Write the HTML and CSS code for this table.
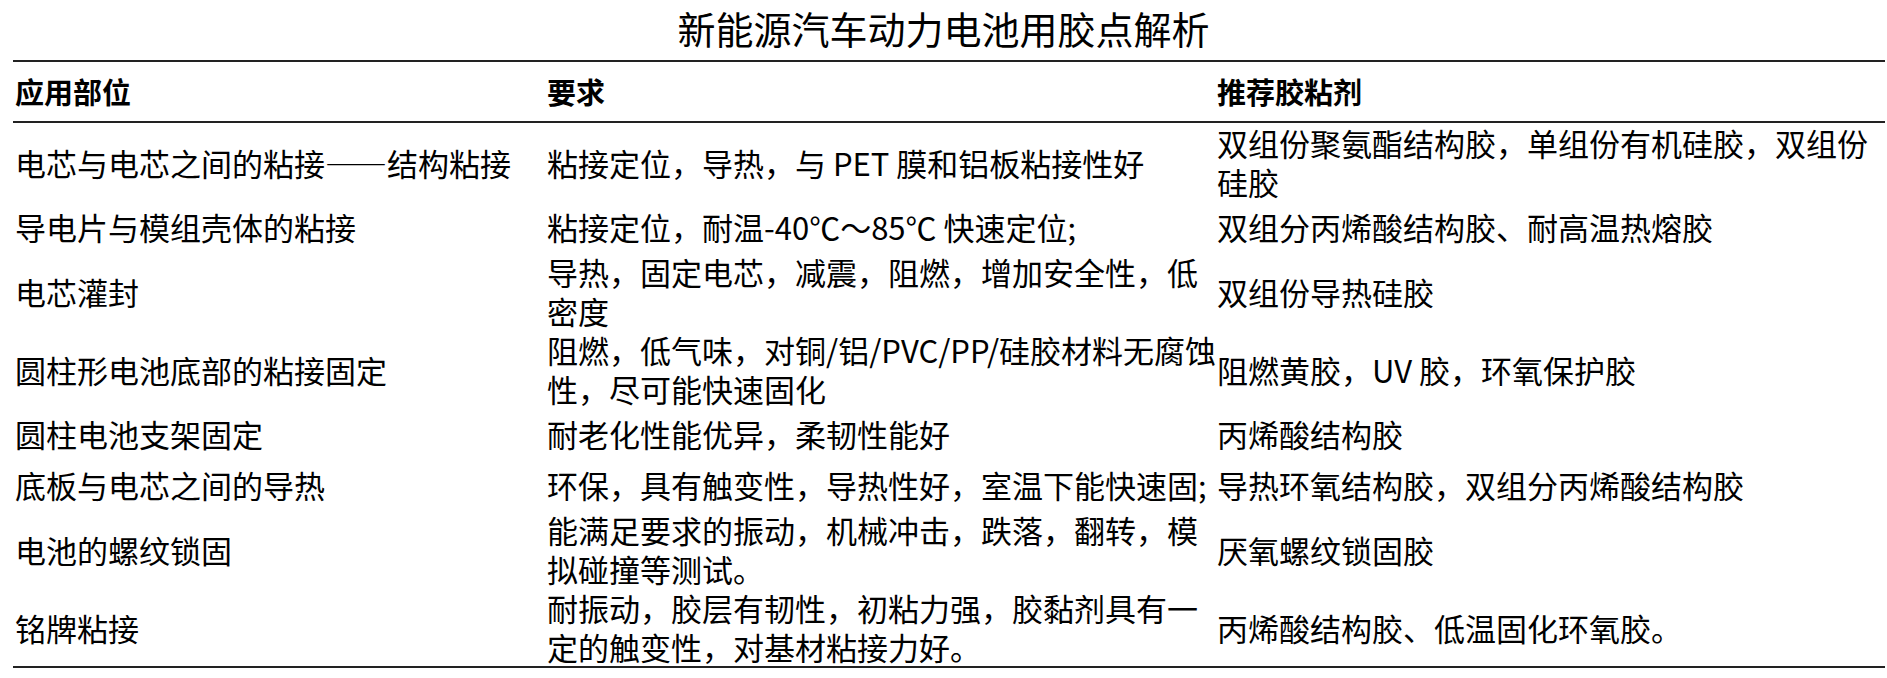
FILE: index.html
```html
<!DOCTYPE html>
<html lang="zh-CN">
<head>
<meta charset="utf-8">
<title>新能源汽车动力电池用胶点解析</title>
<link rel="stylesheet" href="styles.css">
</head>
<body>
<div class="page">
  <h1 class="title">新能源汽车动力电池用胶点解析</h1>
  <table class="glue">
    <colgroup><col class="c1"><col class="c2"><col class="c3"></colgroup>
    <thead>
      <tr><th>应用部位</th><th>要求</th><th>推荐胶粘剂</th></tr>
    </thead>
    <tbody>
      <tr><td>电芯与电芯之间的粘接——结构粘接</td><td>粘接定位，导热，与 PET 膜和铝板粘接性好</td><td>双组份聚氨酯结构胶，单组份有机硅胶，双组份<br>硅胶</td></tr>
      <tr><td>导电片与模组壳体的粘接</td><td>粘接定位，耐温-40℃～85℃ 快速定位;</td><td>双组分丙烯酸结构胶、耐高温热熔胶</td></tr>
      <tr><td>电芯灌封</td><td>导热，固定电芯，减震，阻燃，增加安全性，低<br>密度</td><td>双组份导热硅胶</td></tr>
      <tr><td>圆柱形电池底部的粘接固定</td><td>阻燃，低气味，对铜/铝/PVC/PP/硅胶材料无腐蚀<br>性，尽可能快速固化</td><td>阻燃黄胶，UV 胶，环氧保护胶</td></tr>
      <tr><td>圆柱电池支架固定</td><td>耐老化性能优异，柔韧性能好</td><td>丙烯酸结构胶</td></tr>
      <tr><td>底板与电芯之间的导热</td><td>环保，具有触变性，导热性好，室温下能快速固;</td><td>导热环氧结构胶，双组分丙烯酸结构胶</td></tr>
      <tr><td>电池的螺纹锁固</td><td>能满足要求的振动，机械冲击，跌落，翻转，模<br>拟碰撞等测试。</td><td>厌氧螺纹锁固胶</td></tr>
      <tr><td>铭牌粘接</td><td>耐振动，胶层有韧性，初粘力强，胶黏剂具有一<br>定的触变性，对基材粘接力好。</td><td>丙烯酸结构胶、低温固化环氧胶。</td></tr>
    </tbody>
  </table>
</div>
</body>
</html>
```

FILE: styles.css
```css
html, body {
  margin: 0;
  background: #ffffff;
}

body {
  font-family: "Noto Sans CJK SC", "Noto Sans", sans-serif;
  color: #000000;
}

.page {
  display: flex;
  flex-direction: column;
}

.title {
  margin: 0;
  padding-bottom: 5px;
  font-size: 38px;
  font-weight: 400;
  line-height: 55px;
  text-align: center;
}

.glue {
  margin-left: 13px;
  width: 1872px;
  border-collapse: collapse;
  table-layout: fixed;
}

.glue .c1 { width: 532px; }
.glue .c2 { width: 670px; }

.glue th {
  height: 59px;
  padding: 0 0 0 2px;
  font-size: 29px;
  font-weight: 700;
  line-height: 39px;
  text-align: left;
  vertical-align: middle;
  border-top: 2px solid #222222;
  border-bottom: 2px solid #222222;
}

.glue td {
  height: 51px;
  padding: 0 0 0 2px;
  font-size: 31px;
  line-height: 39px;
  white-space: nowrap;
  vertical-align: middle;
}

.glue tbody tr:last-child td {
  border-bottom: 2px solid #222222;
}
```
